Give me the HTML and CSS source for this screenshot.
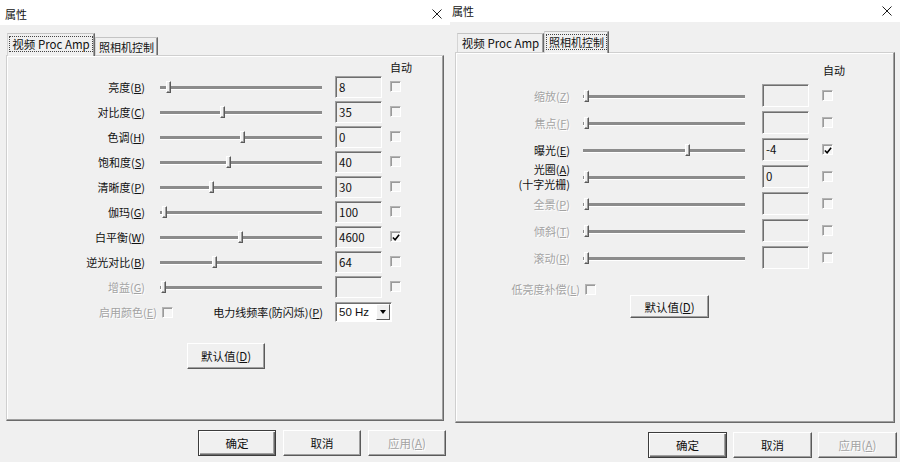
FILE: index.html
```html
<!DOCTYPE html>
<html lang="zh-CN">
	<head>
		<meta charset="UTF-8" />
		<meta name="viewport" content="width=device-width, initial-scale=1.0" />
		<title>属性</title>
		<link rel="stylesheet" href="styles.css">
	</head>
	<body>
		<div class="desk">
			<!-- 视频 Proc Amp 页 -->
			<section class="dialog dialog-a">
				<div class="titlebar">
					<span class="title">属性</span>
					<svg class="close" width="10" height="10" viewBox="0 0 10 10">
						<path d="M0.5 0.5 L9.5 9.5 M9.5 0.5 L0.5 9.5" stroke="#1e1e1e" stroke-width="1" fill="none" />
					</svg>
				</div>
				<div class="tabs">
					<div class="tab active tab-video"><span class="focus">视频 Proc Amp</span></div>
					<div class="tab tab-camera">照相机控制</div>
				</div>
				<div class="page">
					<div class="head">自动</div>
					<div class="rows">
						<div class="row">
							<span class="lbl">亮度(<u>B</u>)</span>
							<div class="slider"><span class="thumb" style="left: 6px"></span></div>
							<div class="edit">8</div>
							<span class="check"></span>
						</div>
						<div class="row">
							<span class="lbl">对比度(<u>C</u>)</span>
							<div class="slider"><span class="thumb" style="left: 60px"></span></div>
							<div class="edit">35</div>
							<span class="check"></span>
						</div>
						<div class="row">
							<span class="lbl">色调(<u>H</u>)</span>
							<div class="slider"><span class="thumb" style="left: 80px"></span></div>
							<div class="edit">0</div>
							<span class="check"></span>
						</div>
						<div class="row">
							<span class="lbl">饱和度(<u>S</u>)</span>
							<div class="slider"><span class="thumb" style="left: 66px"></span></div>
							<div class="edit">40</div>
							<span class="check"></span>
						</div>
						<div class="row">
							<span class="lbl">清晰度(<u>P</u>)</span>
							<div class="slider"><span class="thumb" style="left: 49px"></span></div>
							<div class="edit">30</div>
							<span class="check"></span>
						</div>
						<div class="row">
							<span class="lbl">伽玛(<u>G</u>)</span>
							<div class="slider"><span class="thumb" style="left: 2px"></span></div>
							<div class="edit">100</div>
							<span class="check"></span>
						</div>
						<div class="row">
							<span class="lbl">白平衡(<u>W</u>)</span>
							<div class="slider"><span class="thumb" style="left: 78px"></span></div>
							<div class="edit">4600</div>
							<span class="check checked">
								<svg width="9" height="9" viewBox="0 0 9 9"><path d="M1 4.5 L3.5 7 L8 1.5" stroke="#000" stroke-width="1.8" fill="none" /></svg>
							</span>
						</div>
						<div class="row">
							<span class="lbl">逆光对比(<u>B</u>)</span>
							<div class="slider"><span class="thumb" style="left: 52px"></span></div>
							<div class="edit">64</div>
							<span class="check"></span>
						</div>
						<div class="row">
							<span class="lbl off">增益(<u>G</u>)</span>
							<div class="slider"><span class="thumb" style="left: 1px"></span></div>
							<div class="edit"></div>
							<span class="check"></span>
						</div>
					</div>
					<div class="opt-row">
						<span class="opt-lbl off">启用颜色(<u>E</u>)</span>
						<span class="check"></span>
						<span class="power">电力线频率(防闪烁)(<u>P</u>)</span>
						<div class="combo">
							<span class="combo-text">50 Hz</span>
							<span class="drop"></span>
						</div>
					</div>
					<button class="btn btn-reset" type="button">默认值(<u>D</u>)</button>
				</div>
				<div class="actions">
					<button class="btn btn-default" type="button">确定</button>
					<button class="btn" type="button">取消</button>
					<button class="btn off" type="button">应用(<u>A</u>)</button>
				</div>
			</section>

			<!-- 照相机控制 页 -->
			<section class="dialog dialog-b">
				<div class="titlebar">
					<span class="title">属性</span>
					<svg class="close" width="10" height="10" viewBox="0 0 10 10">
						<path d="M0.5 0.5 L9.5 9.5 M9.5 0.5 L0.5 9.5" stroke="#1e1e1e" stroke-width="1" fill="none" />
					</svg>
				</div>
				<div class="tabs">
					<div class="tab tab-video">视频 Proc Amp</div>
					<div class="tab active tab-camera"><span class="focus">照相机控制</span></div>
				</div>
				<div class="page">
					<div class="head">自动</div>
					<div class="rows">
						<div class="row">
							<span class="lbl off">缩放(<u>Z</u>)</span>
							<div class="slider"><span class="thumb" style="left: 1px"></span></div>
							<div class="edit"></div>
							<span class="check"></span>
						</div>
						<div class="row">
							<span class="lbl off">焦点(<u>F</u>)</span>
							<div class="slider"><span class="thumb" style="left: 1px"></span></div>
							<div class="edit"></div>
							<span class="check"></span>
						</div>
						<div class="row">
							<span class="lbl">曝光(<u>E</u>)</span>
							<div class="slider"><span class="thumb" style="left: 102px"></span></div>
							<div class="edit">-4</div>
							<span class="check checked">
								<svg width="9" height="9" viewBox="0 0 9 9"><path d="M1 4.5 L3.5 7 L8 1.5" stroke="#000" stroke-width="1.8" fill="none" /></svg>
							</span>
						</div>
						<div class="row">
							<span class="lbl two">光圈(<u>A</u>)<br />(十字光栅)</span>
							<div class="slider"><span class="thumb" style="left: 1px"></span></div>
							<div class="edit">0</div>
							<span class="check"></span>
						</div>
						<div class="row">
							<span class="lbl off">全景(<u>P</u>)</span>
							<div class="slider"><span class="thumb" style="left: 1px"></span></div>
							<div class="edit"></div>
							<span class="check"></span>
						</div>
						<div class="row">
							<span class="lbl off">倾斜(<u>T</u>)</span>
							<div class="slider"><span class="thumb" style="left: 1px"></span></div>
							<div class="edit"></div>
							<span class="check"></span>
						</div>
						<div class="row">
							<span class="lbl off">滚动(<u>R</u>)</span>
							<div class="slider"><span class="thumb" style="left: 1px"></span></div>
							<div class="edit"></div>
							<span class="check"></span>
						</div>
					</div>
					<div class="opt-row">
						<span class="opt-lbl off">低亮度补偿(<u>L</u>)</span>
						<span class="check"></span>
					</div>
					<button class="btn btn-reset" type="button">默认值(<u>D</u>)</button>
				</div>
				<div class="actions">
					<button class="btn btn-default" type="button">确定</button>
					<button class="btn" type="button">取消</button>
					<button class="btn off" type="button">应用(<u>A</u>)</button>
				</div>
			</section>
		</div>
	</body>
</html>
```

FILE: styles.css
```css
* {
	box-sizing: border-box;
}
body {
	margin: 0;
	background: #f0f0f0;
	font-family: "Noto Sans CJK SC", "Liberation Sans", sans-serif;
	font-size: 11px;
	color: #111;
}
u {
	text-decoration-thickness: 1px;
	text-underline-offset: 1px;
}
.desk {
	display: flex;
	width: 900px;
	height: 462px;
	overflow: hidden;
}

/* 对话框 */
.dialog {
	width: 450px;
	height: 462px;
	display: flex;
	flex-direction: column;
	background: #f0f0f0;
}
.titlebar {
	height: 25px;
	background: #fff;
	display: flex;
	align-items: center;
	justify-content: space-between;
	padding: 2px 8px 0 5px;
}
.title {
	font-size: 11px;
	line-height: 12px;
}
.dialog-b .titlebar {
	height: 22px;
	padding-top: 0;
	padding-left: 2px;
}

/* 选项卡 */
.tabs {
	display: flex;
	align-items: flex-end;
	height: 23px;
	margin: 8px 0 -1px 7px;
	position: relative;
	z-index: 1;
}
.tab {
	height: 18px;
	margin-bottom: 1px;
	display: flex;
	align-items: center;
	justify-content: center;
	font-size: 11px;
	background: #f0f0f0;
	border-top: 1px solid #c4c4c4;
	border-left: 1px solid #d4d4d4;
	border-right: 1px solid #696969;
	box-shadow: inset -1px 0 0 #a0a0a0;
}
.tab-video {
	font-size: 11.5px;
	width: 88px;
}
.tab-camera {
	width: 63px;
}
.tab.active {
	height: 23px;
	margin-bottom: 0;
	padding-bottom: 2px;
}
.focus {
	outline: 1px dotted #444;
	outline-offset: 0;
	padding: 0 2px;
	line-height: 14px;
}
.dialog-b .tabs {
	height: 22px;
	margin-top: 9px;
}
.dialog-b .tab {
	height: 19px;
}
.dialog-b .tab-video {
	width: 87px;
}
.dialog-b .tab-camera {
	width: 65px;
}
.dialog-b .tab.active {
	height: 22px;
}

/* 属性页 */
.page {
	margin-left: 6px;
	width: 438px;
	height: 366px;
	border-top: 1px solid #cfcfcf;
	border-left: 1px solid #cfcfcf;
	border-right: 1px solid #6a6a6a;
	border-bottom: 1px solid #6a6a6a;
	box-shadow: inset -1px -1px 0 #a0a0a0, inset 1px 1px 0 #fff;
}
.head {
	height: 14px;
	line-height: 14px;
	margin-top: 4px;
	padding-left: 383px;
}
.rows {
	display: flex;
	flex-direction: column;
}
.row {
	display: flex;
	align-items: center;
	height: 25px;
}
.lbl {
	width: 138px;
	text-align: right;
	line-height: 14px;
	flex-shrink: 0;
}
.lbl.two {
	line-height: 15px;
}
.off {
	color: #a3a3a3;
	text-shadow: 1px 1px 0 #fff;
}
.slider {
	position: relative;
	width: 162px;
	height: 12px;
	margin-left: 15px;
	flex-shrink: 0;
}
.slider::before {
	content: "";
	position: absolute;
	left: 0;
	right: 0;
	top: 5px;
	height: 3px;
	background: #8c8c8c;
	border-bottom: 1px solid #fff;
}
.thumb {
	position: absolute;
	top: 0;
	width: 5px;
	height: 12px;
	background: #f0f0f0;
	border-top: 1px solid #fff;
	border-left: 1px solid #fff;
	border-right: 1px solid #5a5a5a;
	border-bottom: 1px solid #5a5a5a;
	box-shadow: inset -1px -1px 0 #a0a0a0;
}
.edit {
	width: 47px;
	height: 22px;
	margin-left: 13px;
	padding-left: 3px;
	font-size: 11.5px;
	line-height: 20px;
	background: #f0f0f0;
	border-top: 1px solid #a0a0a0;
	border-left: 1px solid #a0a0a0;
	border-right: 1px solid #fff;
	border-bottom: 1px solid #fff;
	box-shadow: inset 1px 1px 0 #6e6e6e;
	flex-shrink: 0;
}
.check {
	width: 11px;
	height: 11px;
	margin-left: 8px;
	display: flex;
	align-items: center;
	justify-content: center;
	background: #f6f6f6;
	border-top: 1px solid #b4b4b4;
	border-left: 1px solid #b4b4b4;
	border-right: 1px solid #fff;
	border-bottom: 1px solid #fff;
	box-shadow: inset 1px 1px 0 #9a9a9a;
	flex-shrink: 0;
}
.check svg {
	margin: 1px 0 0 1px;
}

/* 页面底部选项 */
.opt-row {
	display: flex;
	align-items: center;
	height: 20px;
	margin-top: 3px;
}
.opt-lbl {
	width: 150px;
	text-align: right;
	flex-shrink: 0;
}
.opt-row .check {
	margin-left: 5px;
}
.power {
	width: 150px;
	text-align: right;
	flex-shrink: 0;
}
.combo {
	display: flex;
	align-items: center;
	justify-content: space-between;
	width: 57px;
	height: 20px;
	margin-left: 12px;
	padding: 0 1px 0 3px;
	background: #fff;
	border-top: 1px solid #a0a0a0;
	border-left: 1px solid #a0a0a0;
	border-right: 1px solid #fff;
	border-bottom: 1px solid #fff;
	box-shadow: inset 1px 1px 0 #6e6e6e;
}
.combo-text {
	font-family: "Liberation Sans", sans-serif;
	font-size: 11.5px;
}
.drop {
	position: relative;
	width: 14px;
	height: 16px;
	background: #f0f0f0;
	border-top: 1px solid #fff;
	border-left: 1px solid #fff;
	border-right: 1px solid #5a5a5a;
	border-bottom: 1px solid #5a5a5a;
}
.drop::after {
	content: "";
	position: absolute;
	left: 3px;
	top: 5px;
	border-left: 3.5px solid transparent;
	border-right: 3.5px solid transparent;
	border-top: 4px solid #000;
}

/* 按钮 */
.btn {
	display: flex;
	align-items: center;
	justify-content: center;
	width: 78px;
	height: 26px;
	padding: 0;
	font-family: inherit;
	font-size: 11.5px;
	color: #111;
	background: #f0f0f0;
	border-top: 1px solid #fff;
	border-left: 1px solid #fff;
	border-right: 1px solid #5a5a5a;
	border-bottom: 1px solid #5a5a5a;
	box-shadow: inset -1px -1px 0 #a0a0a0;
	border-radius: 0;
}
.btn.off {
	color: #a3a3a3;
	text-shadow: 1px 1px 0 #fff;
}
.btn-default {
	border: 1px solid #3c3c3c;
	box-shadow: inset 1px 1px 0 #fff, inset -1px -1px 0 #6a6a6a, inset -2px -2px 0 #a0a0a0;
}
.btn-reset {
	margin: 21px 0 0 180px;
}
.actions {
	display: flex;
	justify-content: flex-end;
	gap: 7px;
	margin-top: 9px;
	padding-right: 4px;
}

/* 右侧对话框尺寸 */
.dialog-b .page {
	margin-left: 5px;
	width: 440px;
	height: 371px;
}
.dialog-b .head {
	margin-top: 10px;
	padding-left: 367px;
}
.dialog-b .rows {
	margin-top: 5px;
}
.dialog-b .row {
	height: 27px;
}
.dialog-b .lbl {
	width: 114px;
}
.dialog-b .slider {
	margin-left: 13px;
}
.dialog-b .edit {
	height: 23px;
	margin-left: 17px;
}
.dialog-b .row .check {
	margin-left: 13px;
}
.dialog-b .opt-row {
	height: 12px;
	margin-top: 12px;
}
.dialog-b .opt-lbl {
	width: 124px;
}
.dialog-b .btn {
	width: 79px;
}
.dialog-b .btn-reset {
	height: 23px;
	margin: 0 0 0 174px;
}
.dialog-b .actions {
	gap: 6px;
	padding-right: 3px;
}
```
